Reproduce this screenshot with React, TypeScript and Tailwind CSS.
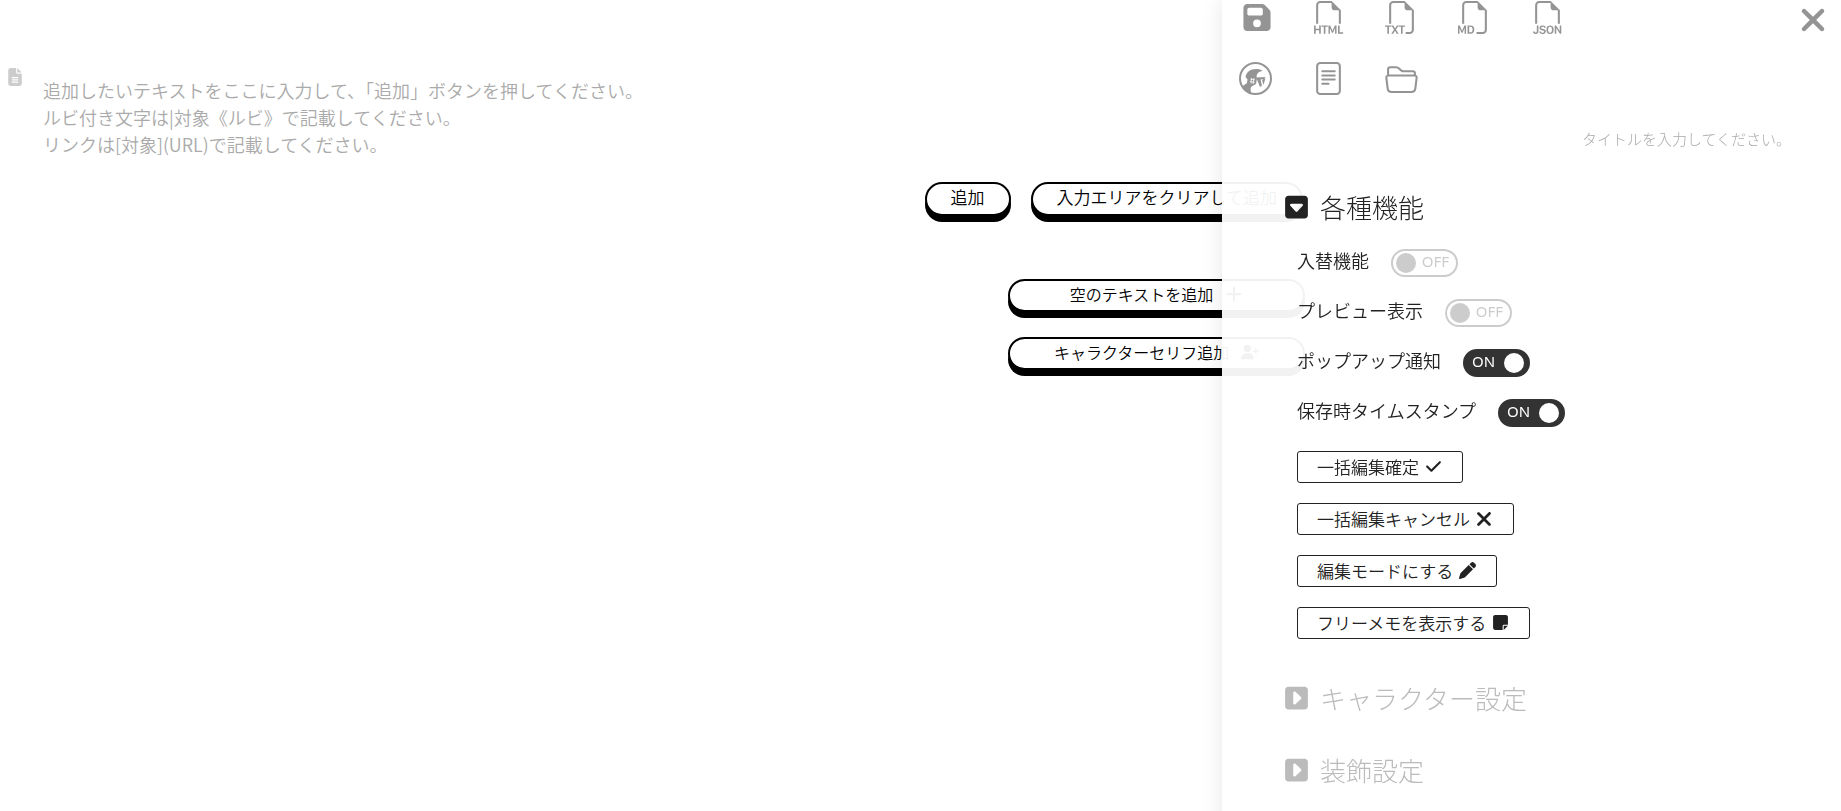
import React, { useState } from 'react';
import { BsFiletypeHtml, BsFiletypeTxt, BsFiletypeMd, BsFiletypeJson, BsFileText, BsFolder2Open } from 'react-icons/bs';
import {
  FaCheck,
  FaFileLines,
  FaFloppyDisk,
  FaNoteSticky,
  FaPen,
  FaPlus,
  FaSquareCaretDown,
  FaSquareCaretRight,
  FaUserPlus,
  FaXmark,
} from 'react-icons/fa6';

const FONT = "font-['Noto_Sans_CJK_JP',sans-serif] font-[350]";

const PLACEHOLDER = `追加したいテキストをここに入力して、「追加」ボタンを押してください。
ルビ付き文字は|対象《ルビ》で記載してください。
リンクは[対象](URL)で記載してください。`;

/**
 * 地球アイコン
 */
function GlobeIcon({ className }: { className?: string }) {
  return (
    <svg className={className} viewBox="0 0 33 33" fill="currentColor">
      <circle cx="16.5" cy="16.5" r="15.5" fill="none" stroke="currentColor" strokeWidth="2" />
      <path d="M6.500 15C7.500 10 11 7 17 7c3 0 5 .5 6.500 2-3.500.5-5.500 2-6 5l.5 2.500L17 22l-4.500 2.500-1 2 .5 4.500C8 30.500 4.500 28 3 24.500l5-3.500.5-3.500z" />
      <path d="M17.500 15.500l9-.5-1.500 2-3.500.5 1.500 6-2 1.500-3-7.500z" />
      <path d="M23 18l3.500-2-2 7z" />
      <path d="M11.500 17l4.500 1M11 19.500l4.500 1M12.500 16l-.5 5.500M15 16l-1 6" stroke="#fff" strokeWidth=".8" />
    </svg>
  );
}

interface PillButtonProps {
  children: React.ReactNode;
  className: string;
}

function PillButton({ children, className }: PillButtonProps) {
  return (
    <button
      type="button"
      className={`flex items-center justify-center rounded-full border-2 border-black bg-white pb-1 leading-6 text-black shadow-[0_6px_0_#000] ${className}`}
    >
      {children}
    </button>
  );
}

interface ToggleRowProps {
  id: string;
  label: string;
  defaultOn?: boolean;
}

/**
 * ON/OFF 切り替えスイッチ付きの行
 */
function ToggleRow({ id, label, defaultOn = false }: ToggleRowProps) {
  const [on, setOn] = useState(defaultOn);

  return (
    <div className="flex h-7 items-center gap-[22px]">
      <label htmlFor={id} className="pb-[6px] text-lg leading-6">
        {label}
      </label>
      <label
        className={`relative flex h-7 w-[67px] items-center rounded-full border-2 font-['Noto_Sans',sans-serif] text-[15px] leading-6 font-normal ${
          on ? 'justify-start border-[#333] bg-[#333] pl-[7px] text-white' : 'justify-end border-[#ccc] bg-white pr-[7px] text-[#ccc]'
        }`}
      >
        <input
          id={id}
          type="checkbox"
          checked={on}
          onChange={(e) => setOn(e.target.checked)}
          className={`absolute inset-y-0 my-auto size-5 appearance-none rounded-full ${on ? 'right-1 bg-white' : 'left-[3px] bg-[#ccc]'}`}
        />
        <span className="pb-1">{on ? 'ON' : 'OFF'}</span>
      </label>
    </div>
  );
}

function ActionButton({ label, icon }: { label: string; icon: React.ReactNode }) {
  return (
    <button
      type="button"
      className="flex h-8 items-center gap-1 rounded-[3px] border border-[#222] bg-white px-[19px] pb-px text-[17px] leading-6"
    >
      {label}
      <span className="flex w-5 justify-center">{icon}</span>
    </button>
  );
}

const FILE_ACTIONS = [
  { name: '保存', icon: <FaFloppyDisk className="ml-[3px] size-[31px]" /> },
  { name: 'HTML', icon: <BsFiletypeHtml className="size-[33px]" /> },
  { name: 'TXT', icon: <BsFiletypeTxt className="size-[33px]" /> },
  { name: 'MD', icon: <BsFiletypeMd className="size-[33px]" /> },
  { name: 'JSON', icon: <BsFiletypeJson className="size-[33px]" /> },
  { name: 'ページ', icon: <GlobeIcon className="size-[33px]" /> },
  { name: 'テキスト', icon: <BsFileText className="size-[33px]" /> },
  { name: 'フォルダ', icon: <BsFolder2Open className="size-[33px]" /> },
];

function SettingsDrawer() {
  return (
    <aside className="fixed top-0 right-0 -bottom-6 w-[619px] overflow-hidden bg-white/95 text-[#222] shadow-[0_0_20px_rgba(0,0,0,0.1)]">
      <div className="flex justify-between pt-px pr-[10px] pl-[17px] text-[#949494]">
        <div className="grid grid-cols-5 gap-x-10 gap-y-7">
          {FILE_ACTIONS.map((action) => (
            <button key={action.name} type="button" aria-label={action.name} className="flex size-[33px] items-center justify-center">
              {action.icon}
            </button>
          ))}
        </div>
        <button type="button" aria-label="閉じる" className="flex h-[38px] w-9 items-center justify-center">
          <FaXmark className="size-9" />
        </button>
      </div>

      <div className="flex justify-end pt-[31px] pr-[50px]">
        <input
          type="text"
          aria-label="タイトル"
          placeholder="タイトルを入力してください。"
          className="h-6 w-80 bg-transparent text-right text-[15px] font-light outline-none placeholder:text-[#aaa]"
        />
      </div>

      <section className="pt-[37px] pl-[63px]">
        <h2>
          <button type="button" className="flex items-center gap-3 text-[26px] leading-10 font-light">
            <FaSquareCaretDown className="h-[26px] w-[23px]" />
            各種機能
          </button>
        </h2>
        <div className="flex flex-col gap-[22px] pt-[22px] pl-3">
          <ToggleRow id="swap" label="入替機能" />
          <ToggleRow id="preview" label="プレビュー表示" />
          <ToggleRow id="popup" label="ポップアップ通知" defaultOn />
          <ToggleRow id="timestamp" label="保存時タイムスタンプ" defaultOn />
        </div>
        <div className="flex flex-col items-start gap-5 pt-6 pl-3">
          <ActionButton label="一括編集確定" icon={<FaCheck className="size-[17px]" />} />
          <ActionButton label="一括編集キャンセル" icon={<FaXmark className="size-[22px]" />} />
          <ActionButton label="編集モードにする" icon={<FaPen className="size-[17px]" />} />
          <ActionButton label="フリーメモを表示する" icon={<FaNoteSticky className="size-[17px]" />} />
        </div>
      </section>

      <section className="flex flex-col gap-8 pt-[39px] pl-[63px] text-[#bbb]">
        <h2>
          <button type="button" className="flex items-center gap-3 text-[26px] leading-10 font-light">
            <FaSquareCaretRight className="h-[26px] w-[23px]" />
            キャラクター設定
          </button>
        </h2>
        <h2>
          <button type="button" className="flex items-center gap-3 text-[26px] leading-10 font-light">
            <FaSquareCaretRight className="h-[26px] w-[23px]" />
            装飾設定
          </button>
        </h2>
      </section>
    </aside>
  );
}

export default function App() {
  return (
    <div className={`min-h-screen bg-white ${FONT}`}>
      {/* 入力エリア */}
      <main className="w-[71%] pt-17 pr-0.5">
        <div className="flex gap-[21px] pl-2">
          <FaFileLines className="h-[18px] w-[14px] shrink-0 text-[#ccc]" />
          <textarea
            rows={3}
            aria-label="追加するテキスト"
            placeholder={PLACEHOLDER}
            className="mt-[9px] block grow resize-none overflow-hidden bg-transparent text-lg leading-[27px] outline-none placeholder:text-[#aaa]"
          />
        </div>

        <div className="flex justify-end gap-5 pt-6 pr-0.5">
          <PillButton className="h-[34px] px-6 text-[17px]">追加</PillButton>
          <PillButton className="h-[34px] px-6 text-[17px]">入力エリアをクリアして追加</PillButton>
        </div>

        <div className="flex flex-col items-end gap-[25px] pt-[63px]">
          <PillButton className="h-[33px] w-[297px] gap-3 text-base">
            空のテキストを追加
            <FaPlus className="size-[18px]" />
          </PillButton>
          <PillButton className="h-[33px] w-[297px] gap-3 text-base">
            キャラクターセリフ追加
            <FaUserPlus className="size-[18px]" />
          </PillButton>
        </div>
      </main>

      <SettingsDrawer />
    </div>
  );
}
